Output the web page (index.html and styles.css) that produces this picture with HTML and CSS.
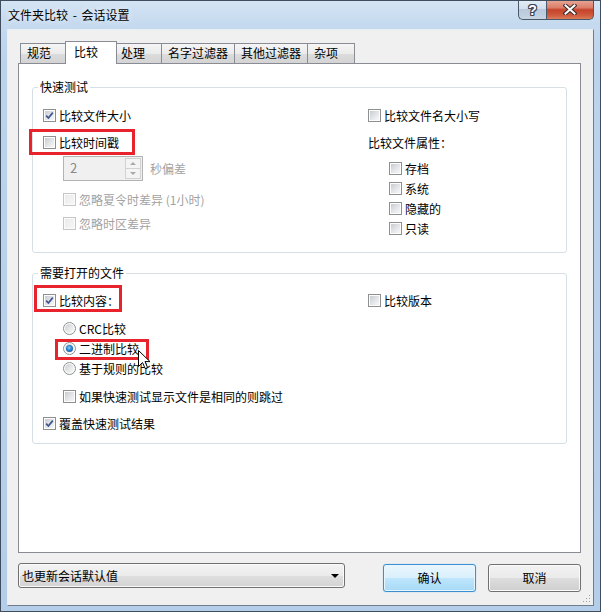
FILE: index.html
```html
<!DOCTYPE html>
<html lang="zh-CN">
<head>
<meta charset="utf-8">
<title>文件夹比较 - 会话设置</title>
<link rel="stylesheet" href="styles.css">
</head>
<body>
<div class="window">
  <div class="titlebar">
    <span class="title">文件夹比较 - 会话设置</span>
    <div class="caption">
      <div class="cap help"><span class="q">?</span></div>
      <div class="cap close">
        <svg width="14" height="11" viewBox="0 0 14 11"><path d="M2.5 1.5 L11.5 9.5 M11.5 1.5 L2.5 9.5" stroke="#3b2a2a" stroke-width="4" stroke-linecap="square" fill="none"/><path d="M2.5 1.5 L11.5 9.5 M11.5 1.5 L2.5 9.5" stroke="#ffffff" stroke-width="2" stroke-linecap="square" fill="none"/></svg>
      </div>
    </div>
  </div>
  <div class="client">
    <div class="tabs">
      <div class="tab">规范</div>
      <div class="tab active">比较</div>
      <div class="tab">处理</div>
      <div class="tab">名字过滤器</div>
      <div class="tab">其他过滤器</div>
      <div class="tab">杂项</div>
    </div>
    <div class="panel">
      <fieldset class="group g1">
        <legend>快速测试</legend>
        <div class="cols">
          <div class="col left">
            <div class="row"><span class="cb checked"><svg viewBox="0 0 11 11" width="11" height="11"><path d="M2.2 5.6 L4.4 8 L8.8 2.6" stroke="#3f5591" stroke-width="1.7" fill="none"/></svg></span>比较文件大小</div>
            <div class="row r-time"><span class="cb"></span>比较时间戳<span class="hl hl1"></span></div>
            <div class="spinrow">
              <div class="spin"><span class="val">2</span><div class="spinbtns"><div class="sb"><span class="up"></span></div><div class="sb"><span class="down"></span></div></div></div>
              <span class="unit">秒偏差</span>
            </div>
            <div class="row sub dis r-dst"><span class="cb disabled"></span>忽略夏令时差异 (1小时)</div>
            <div class="row sub dis r-tz"><span class="cb disabled"></span>忽略时区差异</div>
          </div>
          <div class="col right">
            <div class="row"><span class="cb"></span>比较文件名大小写</div>
            <div class="row r-attr">比较文件属性：</div>
            <div class="row sub2 r-first"><span class="cb"></span>存档</div>
            <div class="row sub2"><span class="cb"></span>系统</div>
            <div class="row sub2"><span class="cb"></span>隐藏的</div>
            <div class="row sub2"><span class="cb"></span>只读</div>
          </div>
        </div>
      </fieldset>
      <fieldset class="group g2">
        <legend>需要打开的文件</legend>
        <div class="cols">
          <div class="col left">
            <div class="row"><span class="cb checked"><svg viewBox="0 0 11 11" width="11" height="11"><path d="M2.2 5.6 L4.4 8 L8.8 2.6" stroke="#3f5591" stroke-width="1.7" fill="none"/></svg></span>比较内容：<span class="hl hl2"></span></div>
            <div class="row sub r-radio1"><span class="rb"></span>CRC比较</div>
            <div class="row sub"><span class="rb on"></span>二进制比较<span class="hl hl3"></span>
              <svg class="cursor" width="13" height="20" viewBox="0 0 13 20"><path d="M0.5 0.5 L0.5 16.5 L4.5 12.5 L7.2 18.6 L9.6 17.6 L7 11.6 L12 11.6 Z" fill="#ffffff" stroke="#000000" stroke-width="1" stroke-linejoin="miter"/></svg>
            </div>
            <div class="row sub"><span class="rb"></span>基于规则的比较</div>
            <div class="row sub r-skip"><span class="cb"></span>如果快速测试显示文件是相同的则跳过</div>
            <div class="row r-over"><span class="cb checked"><svg viewBox="0 0 11 11" width="11" height="11"><path d="M2.2 5.6 L4.4 8 L8.8 2.6" stroke="#3f5591" stroke-width="1.7" fill="none"/></svg></span>覆盖快速测试结果</div>
          </div>
          <div class="col right">
            <div class="row"><span class="cb"></span>比较版本</div>
          </div>
        </div>
      </fieldset>
    </div>
    <div class="footer">
      <div class="combo"><span class="ctext">也更新会话默认值</span><span class="carrow"></span></div>
      <div class="spacer"></div>
      <div class="btn default">确认</div>
      <div class="btn cancel">取消</div>
    </div>
    <svg class="grip" width="8" height="8" viewBox="0 0 8 8">
      <rect x="6" y="0" width="1" height="1" fill="#a0a0a0"/>
      <rect x="3" y="3" width="1" height="1" fill="#a0a0a0"/><rect x="6" y="3" width="1" height="1" fill="#a0a0a0"/>
      <rect x="0" y="6" width="1" height="1" fill="#a0a0a0"/><rect x="3" y="6" width="1" height="1" fill="#a0a0a0"/><rect x="6" y="6" width="1" height="1" fill="#a0a0a0"/>
    </svg>
  </div>
</div>
</body>
</html>
```

FILE: styles.css
```css
* { box-sizing: border-box; }
html, body { margin: 0; padding: 0; }
body {
  width: 601px;
  height: 612px;
  overflow: hidden;
  background: #ffffff;
  font-family: "Noto Sans CJK SC", "Microsoft YaHei", sans-serif;
  font-size: 12px;
  color: #000;
}
.window {
  width: 601px;
  height: 612px;
  border: 1px solid #3f4d5e;
  background: linear-gradient(to bottom, #d4e4f4 0, #c6daef 22px, #bcd3ec 60px, #b4cde9 100%);
  display: flex;
  flex-direction: column;
  overflow: hidden;
}
.titlebar {
  height: 28px;
  flex: none;
  display: flex;
  justify-content: space-between;
  align-items: flex-start;
  padding: 0 6px 0 7px;
}
.title {
  margin-top: 6px;
  line-height: 16px;
  word-spacing: 2px;
  color: #000;
  text-shadow: 0 0 6px rgba(255,255,255,0.9);
}
.caption { display: flex; margin-top: -1px; }
.cap {
  height: 20px;
  display: flex;
  align-items: center;
  justify-content: center;
  border: 1px solid #4a586b;
  border-top: none;
}
.help {
  width: 28px;
  border-right: none;
  border-radius: 0 0 0 5px;
  background: linear-gradient(to bottom, #e6eef7 0, #d3dfec 45%, #b9c9db 50%, #c6d4e3 100%);
}
.q {
  font-family: "Liberation Sans", sans-serif;
  font-weight: bold;
  font-size: 14px;
  line-height: 14px;
  color: #fff;
  text-shadow: 1px 0 0 #3d4656, -1px 0 0 #3d4656, 0 1px 0 #3d4656, 0 -1px 0 #3d4656, 1px 1px 0 #3d4656, -1px -1px 0 #3d4656, 1px -1px 0 #3d4656, -1px 1px 0 #3d4656;
}
.close {
  width: 48px;
  border-radius: 0 0 5px 0;
  background: linear-gradient(to bottom, #e9a899 0, #dc7e69 40%, #c5432a 52%, #cf5a3e 80%, #dc7c5a 100%);
}
.client {
  position: relative;
  flex: none;
  height: 577px;
  margin: 0 6px;
  background: #f0f0f0;
  border: 1px solid;
  border-color: #e6eef6 #6f7d8d #6f7d8d #e6eef6;
  padding: 11px 12px 0 10px;
}
.tabs {
  position: relative;
  z-index: 1;
  display: flex;
  align-items: flex-end;
  height: 22px;
  padding-left: 2px;
}
.tab {
  height: 20px;
  min-width: 48px;
  padding: 0 6px;
  line-height: 18px;
  border: 1px solid #898c95;
  border-bottom: none;
  margin-left: -1px;
  background: linear-gradient(to bottom, #f5f5f5 0, #ebebeb 50%, #dcdcdc 51%, #d4d4d4 100%);
  white-space: nowrap;
}
.tab:first-child { margin-left: 0; }
.tab.active {
  position: relative;
  z-index: 2;
  height: 23px;
  min-width: 52px;
  padding-left: 8px;
  margin: 0 -2px -1px -3px;
  background: #ffffff;
  line-height: 19px;
}
.panel {
  height: 490px;
  background: #ffffff;
  border: 1px solid #898c95;
  padding: 15px 13px 0 13px;
}
.group {
  margin: 0;
  padding: 0 0 14px 0;
  border: 1px solid #d5dfe5;
  border-radius: 3px;
  min-width: 0;
}
.group legend {
  margin-left: 5px;
  padding: 0 2px;
  line-height: 16px;
  font-size: 12px;
}
.g2 { margin-top: 12px; padding-bottom: 10px; }
.cols {
  display: grid;
  grid-template-columns: 335px 1fr;
  padding-top: 10px;
}
.g2 .cols { padding-top: 9px; }
.col.left { padding-left: 10px; }
.row {
  position: relative;
  display: flex;
  align-items: center;
  height: 20px;
  white-space: nowrap;
}
.r-time { margin-top: 7px; }
.r-dst { margin-top: 8px; }
.r-tz { margin-top: 4px; }
.r-attr { margin-top: 7px; }
.r-first { margin-top: 6px; }
.r-radio1 { margin-top: 8px; }
.r-skip { margin-top: 8px; }
.r-over { margin-top: 7px; }
.sub { margin-left: 20px; }
.sub2 { margin-left: 21px; }
.dis { color: #a2a2a2; }

.cb, .rb {
  position: relative;
  flex: none;
  width: 13px;
  height: 13px;
  margin-right: 3px;
  border: 1px solid #8e8f8f;
  background: #fdfdfd;
}
.cb::before {
  content: "";
  position: absolute;
  left: 1px; top: 1px; right: 1px; bottom: 1px;
  background: linear-gradient(135deg, #c7cbd0 0, #e2e4e7 50%, #f7f7f7 100%);
}
.cb svg { position: absolute; left: 0; top: 0; }
.cb.disabled { border-color: #c6c6c6; background: #fbfbfb; }
.cb.disabled::before { background: linear-gradient(135deg, #ebebeb, #f6f6f6); }
.rb { border-radius: 50%; }
.rb::before {
  content: "";
  position: absolute;
  left: 1px; top: 1px; right: 1px; bottom: 1px;
  border-radius: 50%;
  background: linear-gradient(135deg, #c9ccd1 0, #e4e6e8 50%, #fafafa 100%);
}
.rb.on::after {
  content: "";
  position: absolute;
  left: 2px; top: 2px; right: 2px; bottom: 2px;
  border-radius: 50%;
  background: radial-gradient(circle at 45% 40%, #8fd0fb 0, #2a88d6 40%, #18579f 75%, #5c8fc4 100%);
}

.spinrow {
  display: flex;
  align-items: center;
  margin-top: 4px;
  margin-left: 20px;
}
.spin {
  display: flex;
  width: 80px;
  height: 25px;
  border: 1px solid #b3b3b3;
  background: #f0f0f0;
}
.spin .val {
  flex: 1;
  padding-left: 6px;
  line-height: 22px;
  font-size: 13px;
  color: #8a8a8a;
}
.spinbtns {
  width: 16px;
  margin: 1px 1px 1px 0;
  display: flex;
  flex-direction: column;
}
.sb {
  flex: 1;
  border: 1px solid #d2d2d2;
  background: #f4f4f4;
  display: flex;
  align-items: center;
  justify-content: center;
}
.sb + .sb { border-top: none; }
.up, .down { width: 0; height: 0; border-left: 3px solid transparent; border-right: 3px solid transparent; }
.up { border-bottom: 3px solid #a9a9a9; }
.down { border-top: 3px solid #a9a9a9; }
.unit { margin-left: 7px; color: #a2a2a2; }

.hl {
  position: absolute;
  border: 3px solid #e8232b;
  pointer-events: none;
}
.hl1 { left: -14px; top: -3px; width: 106px; height: 26px; }
.hl2 { left: -9px; top: -5px; width: 88px; height: 27px; }
.hl3 { left: -8px; top: 1px; width: 94px; height: 21px; }
.cursor { position: absolute; left: 75px; top: 12px; z-index: 3; }

.footer {
  display: flex;
  align-items: flex-start;
  margin-top: 10px;
}
.combo {
  width: 327px;
  height: 25px;
  display: flex;
  align-items: center;
  justify-content: space-between;
  padding: 0 5px 0 3px;
  border: 1px solid #707070;
  border-radius: 3px;
  background: linear-gradient(to bottom, #f3f3f3 0, #ebebeb 50%, #dfdfdf 51%, #d3d3d3 100%);
  box-shadow: inset 0 0 0 1px #fafafa;
}
.ctext { line-height: 20px; }
.carrow {
  width: 0; height: 0;
  border-left: 4px solid transparent;
  border-right: 4px solid transparent;
  border-top: 4px solid #000;
}
.spacer { flex: 1; }
.btn {
  width: 93px;
  height: 28px;
  margin-top: 1px;
  border: 1px solid #707070;
  border-radius: 3px;
  text-align: center;
  line-height: 25px;
  background: linear-gradient(to bottom, #f2f2f2 0, #ebebeb 50%, #dddddd 51%, #cfcfcf 100%);
  box-shadow: inset 0 0 0 1px #fbfbfb;
}
.btn.default {
  border-color: #3c8fd0;
  background: linear-gradient(to bottom, #eaf6fd 0, #d9f0fc 50%, #bee6fd 51%, #a7d9f5 100%);
  box-shadow: inset 0 0 0 1px #e9f6fe, 0 0 1px #5fb8f0;
}
.btn.cancel { margin-left: 12px; }
.grip { position: absolute; right: 2px; bottom: 2px; }
```
